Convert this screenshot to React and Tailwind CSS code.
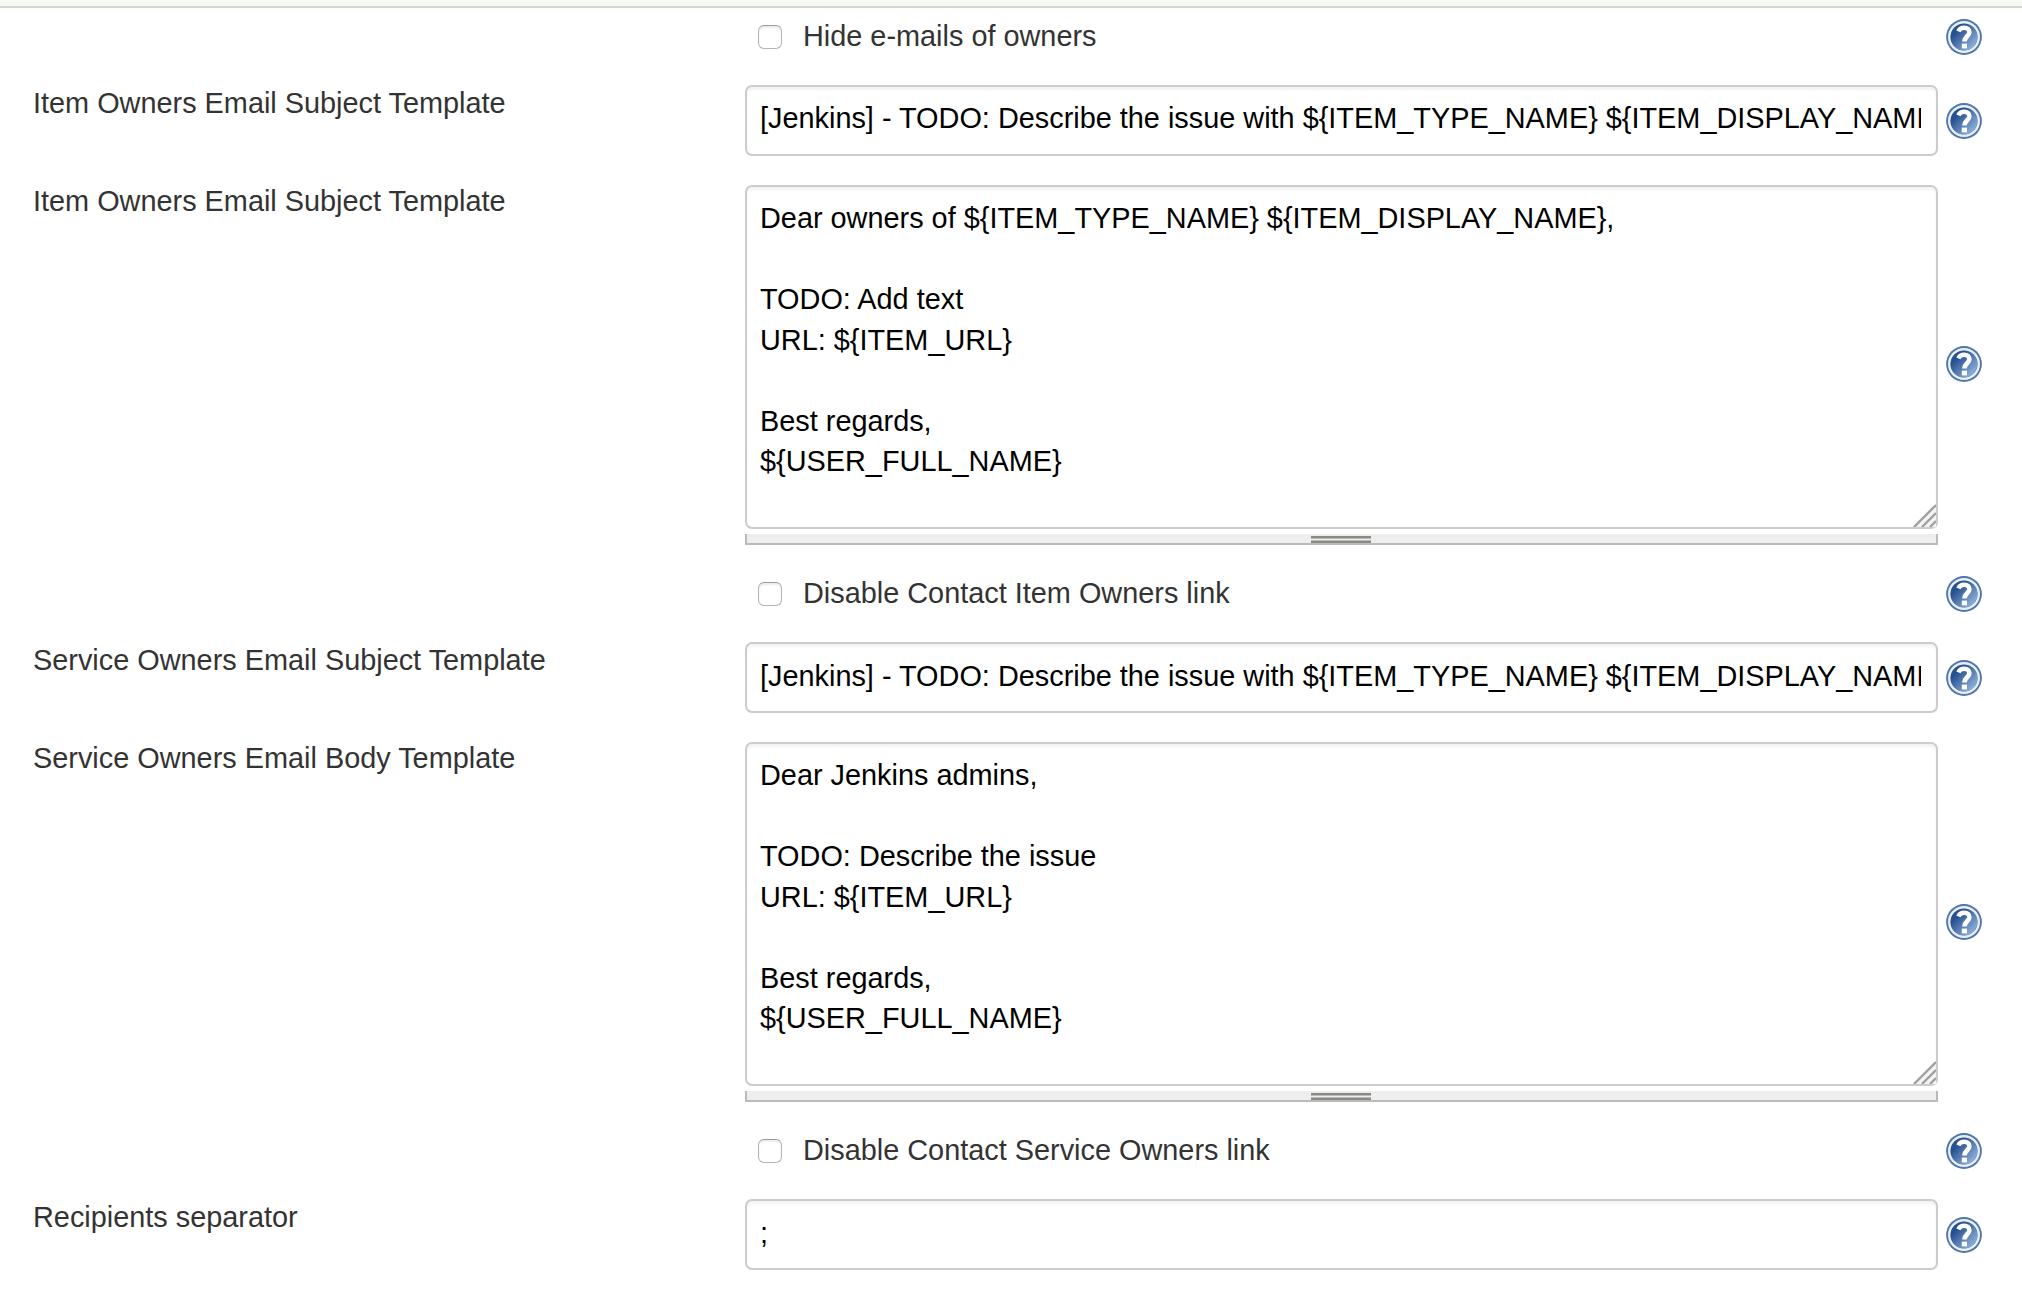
import React from "react";

const ISSUE_SUBJECT = "[Jenkins] - TODO: Describe the issue with ${ITEM_TYPE_NAME} ${ITEM_DISPLAY_NAME}";

function HelpIcon() {
  return (
    <svg className="block h-9 w-9 shrink-0" viewBox="0 0 36 36">
      <defs>
        <linearGradient id="help" x1="0.1" y1="0.1" x2="0.9" y2="0.9">
          <stop offset="0.2" stopColor="#27508f" />
          <stop offset="1" stopColor="#94b6de" />
        </linearGradient>
      </defs>
      <circle cx="18" cy="18" r="17.9" fill="#5076ae" />
      <circle cx="18" cy="18" r="14.8" fill="none" stroke="#e9eff8" strokeWidth="2.4" />
      <circle cx="18" cy="18" r="13.3" fill="url(#help)" />
      <path d="M12.4 12.4C13.6 9.6 15.8 8.8 18.2 8.8C21.4 8.8 23.4 10.5 23.4 13.2C23.4 17.2 18.4 17.4 18.4 22.6" fill="none" stroke="#fff" strokeWidth="4.6" />
      <rect x="15.8" y="24.6" width="5.2" height="4.8" fill="#fff" />
    </svg>
  );
}

function Row({ label, className, labelClass = "", iconClass = "", children }) {
  return (
    <div className={`flex ${className}`}>
      <div className={`w-[745px] shrink-0 pl-[33px] leading-10 text-[#333] ${labelClass}`}>{label}</div>
      <div className="w-[1193px] shrink-0">{children}</div>
      <div className={`ml-2 flex items-center ${iconClass}`}>
        <HelpIcon />
      </div>
    </div>
  );
}

function CheckRow({ children }) {
  return (
    <Row className="h-[40px]">
      <label className="flex h-full items-center pl-[13px]">
        <span className="h-6 w-6 rounded-[6px] border border-[#b4b4b4] border-t-[#9a9a9a] bg-white shadow-[inset_0_2px_2px_rgba(0,0,0,0.08)]" />
        <span className="-mt-[2px] pl-[21px] leading-10 text-[#333]">{children}</span>
      </label>
    </Row>
  );
}

const FIELD = "rounded-[7px] border-2 border-[#ccc] bg-white text-black shadow-[inset_0_3px_3px_rgba(0,0,0,0.05)]";

function TextField({ value, className = "pt-[11px]" }) {
  return (
    <div className={`h-[71px] pr-[15px] pl-[13px] ${FIELD} ${className}`}>
      <div className="overflow-hidden leading-10 whitespace-nowrap">{value}</div>
    </div>
  );
}

function TextArea({ value }) {
  return (
    <div>
      <div className={`relative h-[344px] px-[13px] pt-[11px] ${FIELD}`}>
        <div className="leading-[40.5px] whitespace-pre">{value}</div>
        <svg className="absolute right-0 bottom-0 h-[23px] w-[23px]" viewBox="0 0 23 23">
          <path d="M0 23L23 0V23Z" fill="#f4f4f4" />
          <path d="M1 23L23 1M9 23L23 9M17 23L23 17" stroke="#a0a0a0" strokeWidth="2.4" />
        </svg>
      </div>
      <div className="mt-[5px] flex h-[11px] justify-center border-x-2 border-b-2 border-[#babdb6] bg-[#eee]">
        <div className="mt-[2px] mr-px flex h-[7px] w-[60px] flex-col">
          <div className="h-[2px] bg-[#888a85]" />
          <div className="h-px bg-[#bbb]" />
          <div className="h-px bg-[#eee]" />
          <div className="h-px bg-[#bbb]" />
          <div className="h-[2px] bg-[#888a85]" />
        </div>
      </div>
    </div>
  );
}

export default function App() {
  return (
    <div className="h-[1308px] w-[2022px] overflow-hidden bg-white font-['Liberation_Sans',Arial,sans-serif] text-[28.86px]">
      <div className="h-2 border-b-2 border-[#d3d7cf] bg-[#f6faf2]" />
      <div className="pt-[9px]">
        <CheckRow>Hide e-mails of owners</CheckRow>
        <Row label="Item Owners Email Subject Template" className="mt-[28px] h-[71px]" labelClass="-mt-[2px]">
          <TextField value={ISSUE_SUBJECT} />
        </Row>
        <Row label="Item Owners Email Subject Template" className="mt-[29px] h-[360px]" labelClass="-mt-[4px]" iconClass="-mt-[2px]">
          <TextArea value={"Dear owners of ${ITEM_TYPE_NAME} ${ITEM_DISPLAY_NAME},\n\nTODO: Add text\nURL: ${ITEM_URL}\n\nBest regards,\n${USER_FULL_NAME}"} />
        </Row>
        <div className="h-[29px]" />
        <CheckRow>Disable Contact Item Owners link</CheckRow>
        <Row label="Service Owners Email Subject Template" className="mt-[28px] h-[71px]" labelClass="-mt-[2px]">
          <TextField value={ISSUE_SUBJECT} className="pt-[12px]" />
        </Row>
        <Row label="Service Owners Email Body Template" className="mt-[29px] h-[360px]" labelClass="-mt-[4px]" iconClass="-mt-px">
          <TextArea value={"Dear Jenkins admins,\n\nTODO: Describe the issue\nURL: ${ITEM_URL}\n\nBest regards,\n${USER_FULL_NAME}"} />
        </Row>
        <div className="h-[29px]" />
        <CheckRow>Disable Contact Service Owners link</CheckRow>
        <Row label="Recipients separator" className="mt-[28px] h-[71px]" labelClass="-mt-[2px]">
          <TextField value=";" className="pt-[12px]" />
        </Row>
      </div>
    </div>
  );
}
